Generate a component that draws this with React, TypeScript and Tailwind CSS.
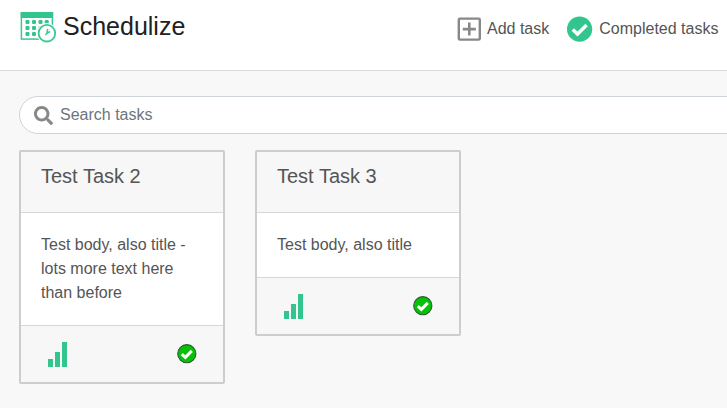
import React from "react";
import { FaSearch } from "react-icons/fa";

function Logo() {
  return (
    <svg width="38" height="34" viewBox="0 0 38 34" className="shrink-0" fill="none">
      <rect x="2.4" y="1.5" width="31" height="25.6" stroke="#3cc795" strokeWidth="1.5" />
      <rect x="1.7" y="0" width="32.5" height="6" fill="#32c58e" />
      <g fill="#32c58e">
        {[10, 16, 22].map((y, r) =>
          [8.5, 15, 21.5, 27.7].slice(0, r === 0 ? 4 : r === 1 ? 3 : 2).map((x) => (
            <rect key={`${x}-${y}`} x={x - 2} y={y - 2} width="4" height="4" rx="1.2" />
          )),
        )}
      </g>
      <circle cx="27.9" cy="21.2" r="10.2" fill="#fff" />
      <circle cx="27.9" cy="21.2" r="8.3" fill="#fff" stroke="#3cc795" strokeWidth="1.8" />
      <path d="M28.7 16.8L27.9 21.3L31 19.5M27.9 21.3L26.4 22.9" stroke="#3cc795" strokeWidth="1.5" />
    </svg>
  );
}

function AddIcon() {
  return (
    <svg width="24" height="24" viewBox="0 0 24 24" fill="none" stroke="#888">
      <rect x="1.8" y="1.6" width="21" height="21" rx="1.2" strokeWidth="2.4" />
      <path d="M12.3 5.6V18.6M5.8 12.1H18.8" strokeWidth="2.6" />
    </svg>
  );
}

function CompletedIcon() {
  return (
    <svg width="26" height="26" viewBox="0 0 26 26" fill="none">
      <circle cx="12.6" cy="13.2" r="12.6" fill="#32c58e" />
      <path d="M5.8 13.5L10.5 18L19.6 9" stroke="#fff" strokeWidth="3.5" />
    </svg>
  );
}

function DoneIcon() {
  return (
    <svg width="20" height="21" viewBox="0 0 20 21" fill="none">
      <circle cx="9.8" cy="10.7" r="9.1" fill="#04c204" stroke="#36583a" strokeWidth="1.1" />
      <path d="M4.8 11.2L8.4 14.4L14.8 7.9" stroke="#fff" strokeWidth="3" />
    </svg>
  );
}

function TaskCard({ title, body }: { title: string; body: string }) {
  return (
    <article className="w-[206px] rounded-[2px] border-2 border-[#cdcdcd] bg-white">
      <h2 className="h-[61px] border-b border-[#d6d6d6] bg-[#f7f7f7] px-5 pt-[9px] text-[20px] leading-[30px]">
        {title}
      </h2>
      <p className="p-5 text-[16px] leading-6">{body}</p>
      <footer className="flex h-[57px] items-start justify-between border-t border-[#d6d6d6] bg-[#f7f7f7] pr-[26px] pl-[27px] pt-4">
        <div className="flex h-[25px] items-end gap-[2px]">
          <span className="h-2 w-[5px] bg-[#32c58e]" />
          <span className="h-[15px] w-[5px] bg-[#32c58e]" />
          <span className="h-[25px] w-[5px] bg-[#32c58e]" />
        </div>
        <span className="pt-px">
          <DoneIcon />
        </span>
      </footer>
    </article>
  );
}

export default function App() {
  return (
    <div className="h-[408px] w-[727px] overflow-hidden bg-[#f8f8f8] font-['Liberation_Sans',Arial,sans-serif] text-[#555]">
      <header className="flex h-[71px] items-start border-b border-[#d9d9d9] bg-white pl-[19px]">
        <div className="flex w-[438px] items-start pt-3">
          <Logo />
          <h1 className="-mt-1 ml-[6px] text-[25px] leading-9 text-[#212121]">Schedulize</h1>
        </div>
        <button className="flex items-center pt-[17px] text-[16px] leading-6">
          <AddIcon />
          <span className="ml-1.5">Add task</span>
        </button>
        <button className="ml-[18px] flex items-center whitespace-nowrap pt-4 text-[16px] leading-[26px]">
          <CompletedIcon />
          <span className="ml-1.5">Completed tasks</span>
        </button>
      </header>
      <main className="pt-[25px] pl-[19px]">
        <div className="flex h-[38px] w-[760px] items-center rounded-full border border-[#ced4da] bg-white pl-3.5">
          <FaSearch size={19} color="#888" />
          <span className="ml-[7px] text-[16px] leading-6 text-[#6c757d]">Search tasks</span>
        </div>
        <div className="mt-4 flex items-start gap-[30px]">
          <TaskCard title="Test Task 2" body="Test body, also title - lots more text here than before" />
          <TaskCard title="Test Task 3" body="Test body, also title" />
        </div>
      </main>
    </div>
  );
}
